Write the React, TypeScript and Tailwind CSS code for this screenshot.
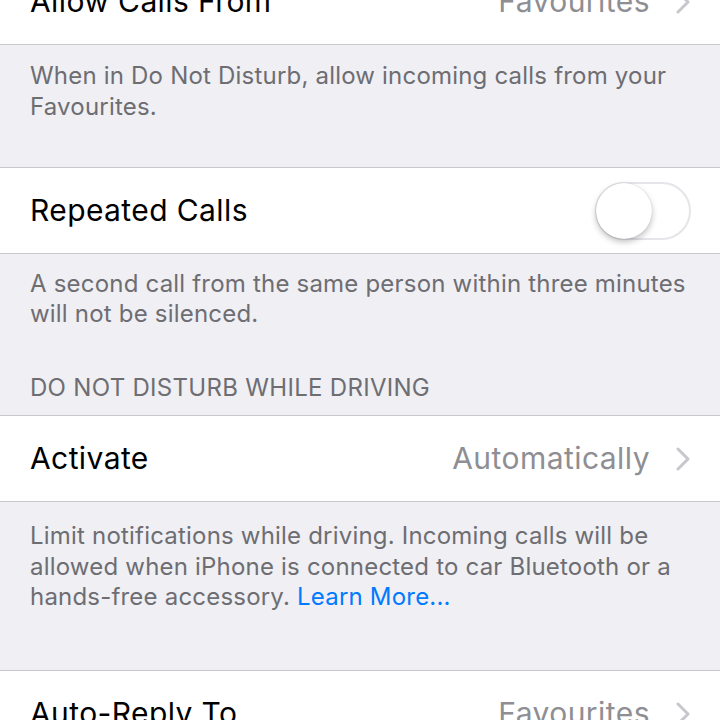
import React from "react";

const font = { fontFamily: "Inter, Roboto, 'Liberation Sans', sans-serif" };

function Chevron() {
  return (
    <svg width="14" height="24" viewBox="0 0 14 24" className="ml-[26px]">
      <path d="M2 2 L12 12 L2 22" fill="none" stroke="#c7c7cc" strokeWidth="3" strokeLinecap="round" strokeLinejoin="round" />
    </svg>
  );
}

function Row({ label, value, toggle }: { label: string; value?: string; toggle?: boolean }) {
  return (
    <div className="h-[85px] bg-white flex items-center pl-[30px] pr-[30px] shrink-0">
      <span className="text-[30px] text-black flex-1 tracking-[0.4px]">{label}</span>
      {value && (
        <span className="flex items-center">
          <span className="text-[30px] text-[#8e8e93] tracking-[0.45px]">{value}</span>
          <Chevron />
        </span>
      )}
      {toggle && (
        <div className="w-[96px] h-[58px] rounded-full border-[2px] border-[#e5e5ea] bg-white relative -mr-[1px]">
          <div className="absolute left-[-1px] top-[-1px] w-[56px] h-[56px] rounded-full bg-white shadow-[0_3px_6px_rgba(0,0,0,0.25),0_0_1px_rgba(0,0,0,0.2)]" />
        </div>
      )}
    </div>
  );
}

function Sep() {
  return <div className="h-px bg-[#c8c7cc] shrink-0" />;
}

export default function App() {
  return (
    <div className="w-[720px] h-[720px] overflow-hidden bg-[#efeff4]" style={font}>
      <div className="flex flex-col -mt-[41px]">
        <Row label="Allow Calls From" value="Favourites" />
        <Sep />
        <div className="h-[122px] px-[30px] pt-[15px] text-[24px] leading-[31px] text-[#6d6d72] tracking-[0.2px]">
          When in Do Not Disturb, allow incoming calls from your Favourites.
        </div>
        <Sep />
        <Row label="Repeated Calls" toggle />
        <Sep />
        <div className="h-[161px] px-[30px] pt-[15px] text-[24px] leading-[30px] text-[#6d6d72] tracking-[0.2px] flex flex-col">
          <div>A second call from the same person within three minutes will not be silenced.</div>
          <div className="mt-[44px] tracking-[0.3px]">DO NOT DISTURB WHILE DRIVING</div>
        </div>
        <Sep />
        <Row label="Activate" value="Automatically" />
        <Sep />
        <div className="h-[168px] px-[30px] pt-[19px] text-[24px] leading-[30.5px] text-[#6d6d72] tracking-[0.2px]">
          Limit notifications while driving. Incoming calls will be allowed when iPhone is connected to car Bluetooth or a hands-free accessory.{" "}
          <span className="text-[#007aff]">Learn More...</span>
        </div>
        <Sep />
        <Row label="Auto-Reply To" value="Favourites" />
      </div>
    </div>
  );
}
